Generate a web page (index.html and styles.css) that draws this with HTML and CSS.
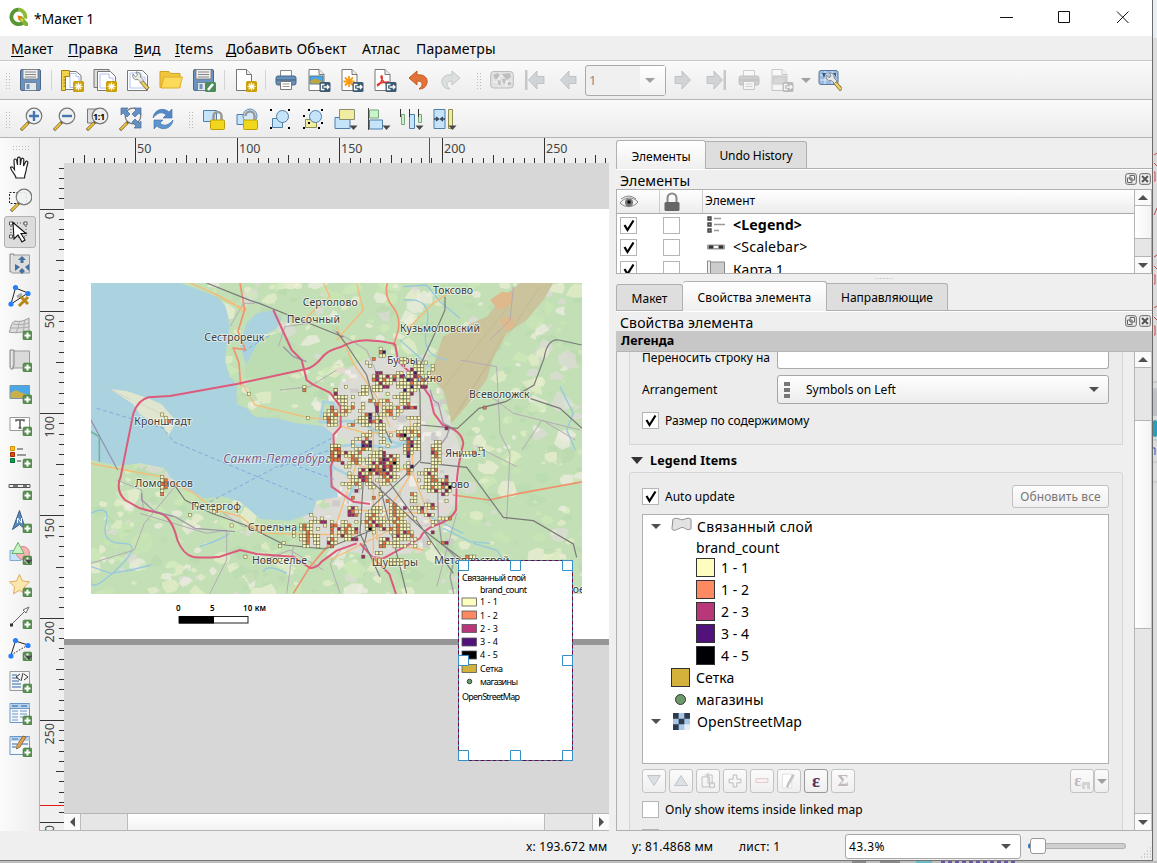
FILE: index.html
```html
<!DOCTYPE html>
<html lang="ru">
<head>
<meta charset="utf-8">
<title>*Макет 1</title>
<link rel="stylesheet" href="styles.css">
</head>
<body>
<svg class="defs" width="0" height="0">
<defs>
<linearGradient id="gloss" x1="0" y1="0" x2="1" y2="0"><stop offset="0" stop-color="#bbb"/><stop offset=".25" stop-color="#eee"/><stop offset="1" stop-color="#ccc"/></linearGradient>
<g id="plus"><rect x="15" y="15" width="9" height="9" rx="1.5" fill="#589052" stroke="#497a45" stroke-width=".6"/><path d="M19.5 16.5v6M16.5 19.5h6" stroke="#fff" stroke-width="2"/></g>
<g id="star"><rect x="13" y="13" width="11" height="11" rx="1.5" fill="#c9a00c"/><path d="M18.500 14.500v8M14.500 18.500h8M15.700 15.700l5.600 5.600M21.300 15.700l-5.600 5.600" stroke="#fff6cf" stroke-width="1.300"/><circle cx="18.500" cy="18.500" r="2" fill="#fff"/></g>
<g id="exp"><rect x="12.500" y="14" width="11" height="10" rx="1.500" fill="#3c5a70"/><path d="M17.500 16.500h-3v5h3M16.500 19h5M20 17l2 2-2 2" stroke="#fff" fill="none" stroke-width="1.300"/></g>
<g id="page"><path d="M4.500 1.500h10l5 5v16h-15z" fill="#fff" stroke="#777"/><path d="M14.500 1.500v5h5" fill="#eee" stroke="#777"/></g>
<g id="lens"><path d="M10 15l-8 8" stroke="#5a4a1b" stroke-width="3"/><path d="M9 16l-6.500 6.500" stroke="#f0c23b" stroke-width="2"/><circle cx="15" cy="9" r="7.800" fill="#eff1f1" fill-opacity=".9" stroke="#777" stroke-width="1.200"/></g>
<g id="drop"><path d="M15.500 18.500h8l-4 4.500z" fill="#484848"/></g>
<g id="wrench"><path d="M15 13l7 8" stroke="#786b38" stroke-width="4"/><path d="M15 13l6.500 7.500" stroke="#efcf62" stroke-width="2.600"/><path d="M7 6a4 4 0 0 0 5 5.500l3 3 2.500-2.500-3-3A4 4 0 0 0 10 4l1.500 3-2 1.800z" fill="#e8e8e8" stroke="#777" stroke-width=".8"/></g>
<symbol id="i-save" viewBox="0 0 24 24"><rect x="1.500" y="1.500" width="20" height="21" rx="1.500" fill="#6b93bf" stroke="#49678b"/><path d="M4 1.500h15v9.500h-15z" fill="#eee" stroke="#777" stroke-width=".8"/><path d="M6 4h11M6 6.500h11M6 9h11" stroke="#888"/><path d="M5.500 14.500h12v8h-12z" fill="#e3e7eb" stroke="#678" stroke-width=".8"/><rect x="7.500" y="16" width="3" height="5" fill="#6b93bf"/></symbol>
<symbol id="i-saveas" viewBox="0 0 24 24"><use href="#i-save"/><rect x="13" y="14" width="11" height="10" rx="1.500" fill="#4d8b58"/><path d="M16 22l5-6" stroke="#fff" stroke-width="2.600"/></symbol>
<symbol id="i-newlay" viewBox="0 0 24 24"><path d="M2 3.500h14l5 4v14H2z" fill="#fff" stroke="#777"/><path d="M10 5.500h6v3h3v11h-9z" fill="#fff" stroke="#b0c2ef"/><path d="M1.500 2.500h8v6h-4v14h-4z" fill="#f0d24c" stroke="#a7850d"/><path d="M3.500 9h2M3.500 12h2M3.500 15h2M3.500 18h2" stroke="#937200"/><use href="#star"/></symbol>
<symbol id="i-dup" viewBox="0 0 24 24"><path d="M1 1.500h15v18H1z" fill="#ddd" stroke="#777"/><path d="M4.500 3.500h13l5 5v14h-18z" fill="#fff" stroke="#777"/><path d="M7 6h9v4h4v10H7z" fill="none" stroke="#b0c2ef"/><use href="#star"/></symbol>
<symbol id="i-mgr" viewBox="0 0 24 24"><path d="M1.500 2.500h15l5 5v15h-20z" fill="#fff" stroke="#777"/><path d="M4 5h11v4h4v11H4z" fill="none" stroke="#b0c2ef"/><use href="#wrench"/></symbol>
<symbol id="i-open" viewBox="0 0 24 24"><path d="M1 3.500h9l2 2h9v14H1z" fill="#eec53c" stroke="#d3a120"/><path d="M2 20L5 9h18.500l-3 11z" fill="#fbd959" stroke="#dfae2c"/></symbol>
<symbol id="i-newpage" viewBox="0 0 24 24"><use href="#page" x="-1"/><use href="#star"/></symbol>
<symbol id="i-print" viewBox="0 0 24 24"><path d="M6.500 8V2.500h11V8" fill="#fff" stroke="#888"/><rect x="2" y="8" width="20" height="9" rx="2" fill="#668fb9" stroke="#466788"/><path d="M2 12h20" stroke="#405f7d"/><path d="M6.500 13.500h11v8h-11z" fill="#fff" stroke="#777"/><path d="M8.500 16h7M8.500 18.500h7" stroke="#999"/></symbol>
<symbol id="i-eximg" viewBox="0 0 24 24"><use href="#page" x="-2.500"/><path d="M3 8h13v8H3z" fill="#47a9ea" stroke="#56798c"/><path d="M3.500 15.500v-3l5-2 7 3v2z" fill="#c1a63e"/><use href="#exp"/></symbol>
<symbol id="i-exsvg" viewBox="0 0 24 24"><use href="#page" x="-2.500"/><path d="M9 8v11M3.500 13.500h11M5 9.500l8 8M13 9.500l-8 8" stroke="#fa9a0d" stroke-width="1.800"/><use href="#exp"/></symbol>
<symbol id="i-expdf" viewBox="0 0 24 24"><use href="#page" x="-2.500"/><path d="M4 18c4-2 6-7 5-10-2-1-1 5 5 8M4 17c3-3 8-3 12-3" fill="none" stroke="#e23427" stroke-width="1.500"/><use href="#exp"/></symbol>
<symbol id="i-undo" viewBox="0 0 24 24"><path d="M3 10l8-7v4c7-1 11 3 10 8-1 4-4 6-8 6 4-3 5-8-2-8v4z" fill="#e1733a" stroke="#c75822"/></symbol>
<symbol id="i-redo" viewBox="0 0 24 24"><path d="M21 10l-8-7v4c-7-1-11 3-10 8 1 4 4 6 8 6-4-3-5-8 2-8v4z" fill="#dcdfdf" stroke="#c3c7c7"/></symbol>
<symbol id="i-atlas" viewBox="0 0 24 24"><rect x=".7" y="3.500" width="22.600" height="16.500" rx="3" fill="#e2e2e2" stroke="#bcbcbc"/><path d="M3 8h18M3 14h18M9 5v14M16 5v14" stroke="#f6f6f6"/><path d="M3 7l5-2 2 2-3 4-2 0zM8 12l3 1-1 5-2-2zM12 6l8-1 1 4-4 3-3-3zM12 11h4l-1 5-2-1zM18 14h3v3h-3z" fill="#bfbfbf"/></symbol>
<symbol id="i-first" viewBox="0 0 24 24"><path d="M2 2h2.500v20H2z" fill="#c4c8cb"/><path d="M5.500 12L14 3v5.500h7v7h-7V21z" fill="#d0d4d6" stroke="#bfc3c6"/></symbol>
<symbol id="i-prev" viewBox="0 0 24 24"><path d="M4.500 12L13 3v5.500h7v7h-7V21z" fill="#d0d4d6" stroke="#bfc3c6"/></symbol>
<symbol id="i-aset" viewBox="0 0 24 24"><rect x="1" y="2.500" width="19" height="14" rx="2" fill="#9bbce0" stroke="#56799f"/><path d="M2 7h17M2 12h17M7 3v13M14 3v13" stroke="#dceaf8"/><path d="M4 5h4l-2 5zM15 5h3v4z" fill="#36597f"/><use href="#wrench" x="1.500" y="1"/></symbol>
<symbol id="i-zin" viewBox="0 0 24 24"><use href="#lens"/><path d="M15 4v10M10 9h10" stroke="#4477af" stroke-width="2.400"/></symbol>
<symbol id="i-zout" viewBox="0 0 24 24"><use href="#lens"/><path d="M10 9h10" stroke="#4477af" stroke-width="2.400"/></symbol>
<symbol id="i-z11" viewBox="0 0 24 24"><path d="M2.500 2h15v14h-15z" fill="#ddd" stroke="#777"/><use href="#lens"/><text x="8" y="12.500" class="t11">1:1</text></symbol>
<symbol id="i-zfull" viewBox="0 0 24 24"><use href="#lens"/><path d="M3 1h7L8 3l4 4-3 3-4-4-2 2zM23 1h-7l2 2-4 4 3 3 4-4 2 2zM23 21h-7l2-2-4-4 3-3 4 4 2-2z" fill="#6491c2" stroke="#426c9c" stroke-width=".7"/></symbol>
<symbol id="i-refresh" viewBox="0 0 24 24"><path d="M2 11C3 2 13 0 18 5l3-3v9h-9l3-3c-4-4-9-2-13 3z" fill="#5389c8" stroke="#396da8" stroke-width=".6"/><path d="M22 13c-1 9-11 11-16 6l-3 3v-9h9l-3 3c4 4 9 2 13-3z" fill="#5f94cf" stroke="#396da8" stroke-width=".6"/></symbol>
<symbol id="i-lock" viewBox="0 0 24 24"><path d="M1.500 3.500h13v11h-13z" fill="#c5e4fa" stroke="#4f7ea8"/><path d="M11.500 13V9a4 4 0 0 1 8 0v4" fill="none" stroke="#999" stroke-width="2.500"/><rect x="8.500" y="13" width="14" height="9.500" rx="1" fill="#f0d71b" stroke="#bd9e0a"/></symbol>
<symbol id="i-unlock" viewBox="0 0 24 24"><path d="M2 7.500h9v10H2z" fill="#c5e4fa" stroke="#4f7ea8"/><circle cx="15" cy="9" r="7" fill="#d3e9f8" stroke="#5f8ab2"/><path d="M10.500 9a4.500 4.500 0 0 1 9 0v4" fill="none" stroke="#999" stroke-width="2.500"/><rect x="8.500" y="13" width="14" height="9.500" rx="1" fill="#f0d71b" stroke="#bd9e0a"/></symbol>
<symbol id="i-group" viewBox="0 0 24 24"><path d="M4.500 11.500h10v9h-10z" fill="#c5e4fa" stroke="#4f7ea8"/><circle cx="14.500" cy="9.500" r="6" fill="#c5e4fa" stroke="#4f7ea8"/><path d="M2 2h2v2H2zM20 2h2v2h-2zM2 20h2v2H2zM20 20h2v2h-2z"/></symbol>
<symbol id="i-ungroup" viewBox="0 0 24 24"><path d="M4.500 12.500h11v8h-11z" fill="#f1eda0" stroke="#8d8d52"/><circle cx="14.500" cy="9.500" r="6" fill="#c5e4fa" stroke="#4f7ea8"/><path d="M7 2h2v2H7zM20 2h2v2h-2zM2 8h2v2H2zM2 20h2v2H2zM20 15h2v2h-2zM17 20h2v2h-2zM7 15h2v2H7z"/></symbol>
<symbol id="i-raise" viewBox="0 0 24 24"><path d="M1 10.500h15v11H1z" fill="#c5e4fa" stroke="#4f7ea8"/><path d="M5.500 2.500h15v10h-15z" fill="#f1eda0" stroke="#8d8d72"/><use href="#drop"/></symbol>
<symbol id="i-align" viewBox="0 0 24 24"><path d="M2.500 3h9v8h-9z" fill="#c8f5ca" stroke="#79a77b"/><path d="M2.500 13h13v9h-13z" fill="#c5e4fa" stroke="#4f7ea8"/><path d="M1.500 1v22" stroke="#444"/><use href="#drop"/></symbol>
<symbol id="i-dist" viewBox="0 0 24 24"><path d="M1.500 7.500h3v10h-3zM18.500 7.500h3v8h-3z" fill="#c8f5ca" stroke="#79a77b"/><path d="M9.500 7.500h5v14h-5z" fill="#c5e4fa" stroke="#4f7ea8"/><path d="M.5 2v8M9.500 2v8M18.500 2v8" stroke="#333"/><use href="#drop"/></symbol>
<symbol id="i-resize" viewBox="0 0 24 24"><path d="M1 2.500h11v19H1z" fill="#c5e4fa" stroke="#4f7ea8"/><path d="M15.500 2.500h4v19h-4z" fill="#f1eda0" stroke="#8d8d52"/><path d="M1 12h4M12 12H8M3 10l2.500 2L3 14M10 10l-2.500 2 2.500 2" stroke="#345" fill="none" stroke-width="1.300"/><use href="#drop"/></symbol>
<symbol id="i-hand" viewBox="0 0 24 24"><path d="M8 22c0-3-5-7-5.500-10.500 1.500-1.500 3 .5 4 2L6 4.500c0-2 2.300-2 2.700 0L9.500 9V2.700c0-2 2.800-2 2.800 0V9l1-5.500c.3-2 2.700-1.500 2.500.5L15.500 10l2-4c1-1.600 2.800-.6 2.300 1L18.500 12c-.5 5-2 6.500-2 10z" fill="#fff" stroke="#222" stroke-width="1.200"/></symbol>
<symbol id="i-zoomrect" viewBox="0 0 24 24"><path d="M1.500 4.500h17v11h-17z" fill="none" stroke="#222" stroke-dasharray="2 1.500"/><use href="#lens" x="1"/></symbol>
<symbol id="i-select" viewBox="0 0 24 24"><path d="M3 3h15v14H3z" fill="none" stroke="#444" stroke-dasharray="1 2"/><path d="M1.500 2h3v3h-3zM16 2h3v3h-3zM1.500 15h3v3h-3z" fill="#fff" stroke="#555"/><path d="M5 2.500l1 16.500 4-4 4 7 3-2-4-6.500h5z" fill="#fff" stroke="#111" stroke-width="1.100"/></symbol>
<symbol id="i-move" viewBox="0 0 24 24"><path d="M2 2h4v18H2z" fill="url(#gloss)" stroke="#888"/><path d="M5 3h16.500v18H4" fill="#ddd" stroke="#999"/><path d="M14 4l4 4h-2.500v3h-3V8H10zM14 22l3-3-3-3-3 3zM7 12l5 3-5 4zM21 12l-4 3 4 4z" fill="#42709f"/></symbol>
<symbol id="i-nodes" viewBox="0 0 24 24"><path d="M3 20L7.500 4 20 9 3 20" stroke="#222" fill="none"/><path d="M11 11l9 9M20 13l-9 9" stroke="#b7871b" stroke-width="3"/><path d="M9 13l5-3" stroke="#aaa" stroke-width="3"/><circle cx="3" cy="20" r="2.600" class="nd"/><circle cx="7.500" cy="3.500" r="2.600" class="nd"/><circle cx="20" cy="9.500" r="2.600" class="nd"/></symbol>
<symbol id="i-map3d" viewBox="0 0 24 24"><path d="M1 16c2-2 1-9 6-11 5 1 9 0 14-3v14c-7-1-12 2-20 0z" fill="#ddd" stroke="#999"/><path d="M5 8c5 1 10 1 16-1M3 12c6 0 12 0 18-1M12 5c-2 4-1 7-4 11M17 4c-2 4 0 8-2 11" stroke="#aaa" fill="none"/><use href="#plus"/></symbol>
<symbol id="i-map" viewBox="0 0 24 24"><path d="M5 3h16.500v17H5z" fill="#dadada" stroke="#999"/><path d="M2 2h4v16H5v3H3l-1-2z" fill="url(#gloss)" stroke="#888"/><use href="#plus"/></symbol>
<symbol id="i-pic" viewBox="0 0 24 24"><path d="M2 5.500h19.500v13H2z" fill="#4ba8e8" stroke="#7596a7"/><path d="M2.500 18v-5l5-3 7 3 6.500 2v3z" fill="#c9ae4a"/><use href="#plus"/></symbol>
<symbol id="i-label" viewBox="0 0 24 24"><path d="M2 5.500h19.500v13H2z" fill="#fff" stroke="#999"/><path d="M8 9.500V8h8v1.500M12 8v8M10.500 16h3" stroke="#555" stroke-width="1.500" fill="none"/><use href="#plus"/></symbol>
<symbol id="i-legend" viewBox="0 0 24 24"><path d="M2.500 2.500h4v4h-4z" fill="#ffc51b" stroke="#d68a00"/><path d="M2.500 8.500h4v4h-4z" fill="#e6470f" stroke="#a72900"/><path d="M2.500 14.500h4v4h-4z" fill="#0aa354" stroke="#006931"/><path d="M9 5h6M9 11h9M9 17h4" stroke="#999" stroke-width="2"/><use href="#plus"/></symbol>
<symbol id="i-scale" viewBox="0 0 24 24"><path d="M1 8.500h21v3H1z" fill="#eee" stroke="#555"/><path d="M5 10h5M15 10h4" stroke="#777" stroke-width="2"/><use href="#plus"/></symbol>
<symbol id="i-north" viewBox="0 0 24 24"><path d="M11.500 1.500l6 19-6-5-7 5z" fill="#5c8abb" stroke="#345b84"/><path d="M9.500 14V9l4 5V9" stroke="#fff" fill="none"/><use href="#plus"/></symbol>
<symbol id="i-shape" viewBox="0 0 24 24"><path d="M2 9.500h11v10H2z" fill="#c5e4fa" stroke="#7eabcf"/><circle cx="15" cy="12" r="6.500" fill="#f6b5b3" stroke="#de8785"/><path d="M10 1.500l6 11H4z" fill="#c6f4c5" stroke="#6caf6a"/><use href="#plus"/><use href="#drop" x="1"/></symbol>
<symbol id="i-marker" viewBox="0 0 24 24"><path d="M11.500 1.500l3 6.500 7 .8-5 5 1 7-6-3.500-6 3.500 1-7-5-5 7-.8z" fill="#fbe6ad" stroke="#e3ab60"/><use href="#plus"/></symbol>
<symbol id="i-arrow" viewBox="0 0 24 24"><path d="M3 20L17 6" stroke="#666"/><path d="M21 2l-6 3 3 3z" fill="#fff" stroke="#666"/><path d="M2 18.500h3v3H2z" fill="#333"/><use href="#plus"/></symbol>
<symbol id="i-poly" viewBox="0 0 24 24"><path d="M3 18L7.500 4 20 8" stroke="#222" fill="none"/><path d="M20 8L3 18" stroke="#222" stroke-dasharray="1.500 1.500"/><circle cx="3" cy="19" r="2.600" class="nd"/><circle cx="7.500" cy="3.500" r="2.600" class="nd"/><circle cx="20" cy="8.500" r="2.600" class="nd"/><use href="#plus"/><use href="#drop" x="1"/></symbol>
<symbol id="i-html" viewBox="0 0 24 24"><path d="M2 2.500h19.500v19H2z" fill="#f5f5f5" stroke="#999"/><path d="M4 6h5M4 9h6M4 12h7M4 15h9M4 18h9" stroke="#6d97c4" stroke-width="1.500"/><path d="M12 5l-4 3 4 3M16 5l4 3-4 3M15 4l-2 8" stroke="#333" fill="none"/><use href="#plus"/></symbol>
<symbol id="i-table" viewBox="0 0 24 24"><path d="M2 2.500h19.500v19H2z" fill="#f5f7fa" stroke="#6a96c6"/><path d="M2.500 3h19v4h-19z" fill="#b5d2ee"/><path d="M4 5h6M13 5h6" stroke="#5586b7" stroke-width="1.500"/><path d="M2 7.500h19M4 10h6M12 10h7M4 13h6M12 13h7M4 16h6M12 16h4M4 19h6" stroke="#6a96c6"/><use href="#plus"/></symbol>
<symbol id="i-ftable" viewBox="0 0 24 24"><path d="M2 3.500h19.500v18H2z" fill="#f5f7fa" stroke="#6a96c6"/><path d="M2.500 4h19v4h-19z" fill="#b5d2ee"/><path d="M4 6h6M4 11h5M4 14h4M14 11h6" stroke="#6a96c6" stroke-width="1.300"/><path d="M15 3l-6 9-.5 4 3.500-2 6-10z" fill="#dfa34b" stroke="#84592a" stroke-width=".8"/><use href="#plus"/></symbol>
<symbol id="i-check" viewBox="0 0 16 16"><path d="M3.500 7l3 5 6-9.500" fill="none" stroke="#000" stroke-width="2.200"/></symbol>
<symbol id="i-float" viewBox="0 0 12 12"><rect x=".7" y=".7" width="10.600" height="10.600" rx="1.800" fill="none" stroke="#666"/><path d="M5 2.500h4.500V7H5z M2.500 5h4.500v4.500H2.500z" fill="#efefef" stroke="#666"/></symbol>
<symbol id="i-close" viewBox="0 0 12 12"><rect x=".7" y=".7" width="10.600" height="10.600" rx="1.800" fill="none" stroke="#666"/><path d="M3 3l6 6M9 3l-6 6" stroke="#555" stroke-width="2"/></symbol>
</defs>
</svg>
<div class="screen">
<main class="window">
  <header class="title">
    <svg class="logo" viewBox="0 0 20 20"><path d="M9.800 2.600a7.300 7.300 0 1 0 5.500 12" fill="none" stroke="#589632" stroke-width="3.800"/><path d="M9.500 2.600a7.300 7.300 0 0 1 6.700 9" fill="none" stroke="#8dbb36" stroke-width="3.800"/><path d="M10 10l3-.5 6 6.500v3h-3l-6-6z" fill="#83b238"/><path d="M8.500 8.500l5 .8-4 4z" fill="#ee7913"/><path d="M12 12l2 2" stroke="#f0d038" stroke-width="2"/></svg>
    <span class="titletext">*Макет 1</span>
    <svg class="winctl" viewBox="0 0 140 20"><path d="M4 10.500h13M62.500 4.500h11v11h-11zM121 4.500l11.500 11.500M132.500 4.500L121 16" fill="none" stroke="#111"/></svg>
  </header>
  <nav class="menu"><span class="m1"><u>М</u>акет</span><span class="m2"><u>П</u>равка</span><span class="m3"><u>В</u>ид</span><span class="m4"><u>I</u>tems</span><span class="m5"><u>Д</u>обавить Объект</span><span class="m6">Атлас</span><span class="m7">Параметры</span></nav>
  <div class="bar">
    <i class="grip"></i><svg><use href="#i-save"/></svg><i class="sep"></i><svg><use href="#i-newlay"/></svg><svg><use href="#i-dup"/></svg><svg><use href="#i-mgr"/></svg><svg><use href="#i-open"/></svg><svg><use href="#i-saveas"/></svg><i class="sep"></i><svg><use href="#i-newpage"/></svg><i class="sep"></i><svg><use href="#i-print"/></svg><svg><use href="#i-eximg"/></svg><svg><use href="#i-exsvg"/></svg><svg><use href="#i-expdf"/></svg><svg><use href="#i-undo"/></svg><svg><use href="#i-redo"/></svg><i class="grip mid"></i><svg><use href="#i-atlas"/></svg><svg><use href="#i-first"/></svg><svg><use href="#i-prev"/></svg>
    <div class="pagebox"><span>1</span><b><i class="tri dim"></i></b></div>
    <svg class="flip"><use href="#i-prev"/></svg><svg class="flip"><use href="#i-first"/></svg><svg class="gray"><use href="#i-print"/></svg><svg class="gray"><use href="#i-eximg"/></svg><i class="tri dim lone"></i><svg><use href="#i-aset"/></svg>
  </div>
  <div class="bar two">
    <i class="grip"></i><svg><use href="#i-zin"/></svg><svg><use href="#i-zout"/></svg><svg><use href="#i-z11"/></svg><svg><use href="#i-zfull"/></svg><svg><use href="#i-refresh"/></svg><i class="grip mid"></i><svg><use href="#i-lock"/></svg><svg><use href="#i-unlock"/></svg><svg><use href="#i-group"/></svg><svg><use href="#i-ungroup"/></svg><svg><use href="#i-raise"/></svg><svg><use href="#i-align"/></svg><svg><use href="#i-dist"/></svg><svg><use href="#i-resize"/></svg>
  </div>
  <div class="body">
    <aside class="tools"><i class="hgrip"></i><span><svg><use href="#i-hand"/></svg></span><span><svg><use href="#i-zoomrect"/></svg></span><span class="on"><svg><use href="#i-select"/></svg></span><span><svg><use href="#i-move"/></svg></span><span><svg><use href="#i-nodes"/></svg></span><span><svg><use href="#i-map3d"/></svg></span><span><svg><use href="#i-map"/></svg></span><span><svg><use href="#i-pic"/></svg></span><span><svg><use href="#i-label"/></svg></span><span><svg><use href="#i-legend"/></svg></span><span><svg><use href="#i-scale"/></svg></span><span><svg><use href="#i-north"/></svg></span><span><svg><use href="#i-shape"/></svg></span><span><svg><use href="#i-marker"/></svg></span><span><svg><use href="#i-arrow"/></svg></span><span><svg><use href="#i-poly"/></svg></span><span><svg><use href="#i-html"/></svg></span><span><svg><use href="#i-table"/></svg></span><span><svg><use href="#i-ftable"/></svg></span></aside>
    <section class="view">
      <svg class="rtop" id="rtop" viewBox="40 138 569 25"></svg>
      <svg class="rleft" id="rleft" viewBox="40 163 24 667"></svg>
      <svg class="canvas" viewBox="64 163 545 650">
        <rect x="64" y="163" width="545" height="650" fill="#d7d7d7"/><rect x="64" y="209" width="545" height="430" fill="#fff"/><rect x="64" y="639" width="545" height="6" fill="#969696"/>
        <svg x="91" y="283" width="491" height="311" viewBox="3 9 1473 933" preserveAspectRatio="none">
          <rect width="1480" height="950" fill="#c3dfb6"/>
          <g id="patches"></g>
          <path d="M765 270L830 235 940 230 1000 300 1070 400 1110 500 1105 660 1050 740 960 820 860 830 700 800 640 800 670 700 720 680 700 430 735 350z" fill="#dedcda" opacity=".88"/>
          <g id="blocks"></g>
          <path d="M1058 170L1110 145 1190 110 1240 50 1290 9 1390 9 1360 60 1310 120 1250 160 1210 230 1190 300 1140 365 1085 430 1060 330 1020 290z" fill="#cac39b"/>
          <path d="M1085 420L1350 20M1055 330L1270 60M1110 390L1240 170" stroke="#b6a77f" stroke-width="1.500" opacity=".6"/>
          <path d="M1200 60l35-25 40 5-15 35-35 15zM1230 120l35-15 10 30-25 20z" fill="#dfb98b"/>
          <path d="M3 9H270L330 30 380 50 405 75 415 110 418 150 410 190 406 245 420 290 440 312 440 372 470 385 495 410 560 415 620 430 700 438 727 460 722 500 732 560 725 600 745 650 680 662 668 700 600 722 510 717 480 690 450 665 400 650 340 655 290 625 240 592 225 565 150 550 80 558 30 545 3 540z" fill="#abd3df"/>
          <path d="M60 327l50 6 60 20 45 20 25 30 20 20-25 45-15-30-40-15-30-20-22-32z" fill="#e0e5d0"/><path d="M60 327l60 30M150 370l70 35 20 20" stroke="#a58794" stroke-dasharray="4 4" fill="none"/>
          <path d="M450 195l20-65 30-30 50-10 25 25-15 30-35 20-25 65-30 30z" fill="#abd3df"/>
          <path d="M465 260l45-85 65-20 55 60 10 50-110 35-65-10z" fill="#bcdcb2"/>
          <path d="M700 365l30 5 10 60-50-5zM720 430q80-20 130 20t80 40 60-30M730 500q70-10 140 0t90-30M725 560l80 40-30 50" fill="none" stroke="#abd3df" stroke-width="9"/>
          <path d="M3 700q60-30 45 30t50 60-20 80-75 20M330 800q60-20 90-40M3 860l60 20 60-10 60-15M590 880q-60-30-70-5M940 20l70-5 40 50 60 50M940 60q90-10 70 80t60 100M1150 790l70 20 30 45M1410 320l40 80-20 50 26 60M1060 745l80 40 60 5M1000 700l120 60M930 180l90 80" fill="none" stroke="#97c9de" stroke-width="4"/>
          <g fill="none" stroke="#b4abb5" stroke-width="3"><path d="M3 850l130-40 30-80 100-120M80 600l75 30 5 60 90 20M150 700l200 60 60-10v90l-50 100M420 140l40-70 35 0M565 200l20-60 70-10M740 270l-80 50-90 10M400 700l60 40 150 0M610 800l-20 140M500 850l100-40 100 60M730 150l100 60 30 70M1110 240l110 20 10 200 30 60-10 200M1270 20l-10 100-60 60M1456 480l-100-60-60 90M1100 700l-60 220M1160 500l120 60M1190 340l80 60 200 50M750 940l-30-90 40-50"/></g>
          <g fill="none" stroke="#f5bb77" stroke-width="4"><path d="M300 9l80 35 40 25 50 20M640 120l80-70-20-41M370 40l60 30 30 25M450 300l45 75 160 38 90 8M3 550l100 20 110 20 100 50 60 50 80 20 60 50 280 5M720 430l110 30 160-10M740 140l50 110 70 100 40 90M735 510l80 50 150 10 60 160M850 440v380M800 550l-60 180M870 600l-10 180M960 420l10 150-100 160M780 690l230 10M890 790l110 20M720 840l180-90 90-80M740 180l80-90-20-80M950 150l80-80 60-40"/></g>
          <g fill="none" stroke="#f0926e" stroke-width="5"><path d="M450 9l14 80-20 65 22 55-36-5 17 45 5 67M892 9q-10 40 15 70t18 70l-15 50M1088 645l110 15 90-20 190-35M720 790l-60 70-50 80"/></g>
          <g fill="none" stroke="#dd5a7b" stroke-width="6" stroke-linejoin="round"><path d="M550 90L605 210 635 240 650 300 668 313 720 338 752 380 752 440 730 465 733 530 722 560 725 620 760 645 790 665 840 672"/><path d="M915 192Q870 182 850 182 800 175 755 200 715 210 700 228 670 265 645 268L440 312 240 348 175 352Q145 360 130 400L92 590Q75 630 105 660L150 685 210 700Q245 710 262 780 280 825 310 831 340 835 390 830L450 810 500 822 610 830 660 864Q680 865 695 845L740 812 800 790"/><path d="M915 192L925 245 985 300 1020 350 1032 400 1058 435Q1115 450 1120 490 1100 570 1100 620L1098 690Q1085 720 1030 738 1000 750 990 775L935 805 880 835 848 832 810 790M848 832l50 50 20 60"/></g>
          <g fill="none" stroke="#797979" stroke-width="3.500"><path d="M350 9l130 52 30 10 100 40 150 60M740 155l30 40 60 90 30 110 45 95M250 610l35 50 80 40 100 35 120 60 120 12 150-60M1065 50v40l-35 80-50 110 10 60 2 200-50 50-95 90-30 140M992 435l110 10 65-60 80-20 85-50 30-80q10-60 45-55l68 15M1320 355l90 30 66 60M990 547l140 15 110 150 90 10 120 70 10 40M840 600l160 150 250 190M900 610l100 140 90 130M870 620l80 320M820 600l-10 160 60 130"/></g>
          <g fill="none" stroke="#8b7a9d" stroke-width="4" opacity=".7"><path d="M3 420l80 150M155 640v20l40 35 60 15 60 35 120 10M1020 330l10 30 15 10 15 60 20 10-10 30-30 40 5 200 10 80 40 40-15 60 20 90M580 200l30 30 40 15"/></g>
          <path d="M3 455l25 15v75" fill="none" stroke="#73b39f" stroke-width="5"/>
          <path d="M20 385l200 60 30 40 420 175M360 665l365-190M570 560l150-50M460 215l80-50M570 540l170 60" fill="none" stroke="#82a9de" stroke-width="3" stroke-dasharray="12 8"/>
          <g class="maplabels">
            <text x="343" y="184" textLength="180">Сестрорецк</text><text x="638" y="79" textLength="165">Сертолово</text><text x="590" y="130" textLength="160">Песочный</text><text x="1029" y="43" textLength="120">Токсово</text><text x="930" y="157" textLength="240">Кузьмоловский</text><text x="891" y="253" textLength="92">Бугры</text><text x="936" y="305" textLength="121">Мурино</text><text x="1137" y="355" textLength="182">Всеволожск</text><text x="133" y="434" textLength="172">Кронштадт</text><text x="135" y="620" textLength="174">Ломоносов</text><text x="304" y="689" textLength="149">Петергоф</text><text x="473" y="753" textLength="148">Стрельна</text><text x="486" y="853" textLength="165">Новоселье</text><text x="845" y="857" textLength="139">Шушары</text><text x="1033" y="853" textLength="225">Металлострой</text><text x="1066" y="532" textLength="124">Янино-1</text><text x="1010" y="625" textLength="128">Кудрово</text><text x="1448" y="938">ое</text><text class="city" x="400" y="550" textLength="322">Санкт-Петербург</text>
          </g>
          <g id="cells"></g>
        </svg>
        <g class="sb"><text x="176" y="611">0</text><text x="210" y="611">5</text><text x="243" y="611" textLength="23">10 км</text><rect x="179" y="616.5" width="69" height="6.500" fill="#fff" stroke="#222"/><rect x="179" y="616" width="35" height="7.500"/></g>
        <rect x="458.500" y="560.500" width="114" height="200" fill="#fff" stroke="#3390c8"/><rect x="458.500" y="560.500" width="114" height="200" fill="none" stroke="#6c0c3a" stroke-dasharray="4 2"/>
        <g class="lg"><text x="462" y="581" textLength="64">Связанный слой</text><text x="480" y="593" textLength="47">brand_count</text><text x="480" y="605" textLength="18">1 - 1</text><text x="480" y="619" textLength="18">1 - 2</text><text x="480" y="632" textLength="18">2 - 3</text><text x="480" y="645" textLength="18">3 - 4</text><text x="480" y="658" textLength="18">4 - 5</text><text x="480" y="672" textLength="23">Сетка</text><text x="480" y="685" textLength="38">магазины</text><text x="462" y="700" textLength="58">OpenStreetMap</text></g>
        <g stroke="#555" stroke-width=".8"><rect x="462" y="598" width="14.500" height="8" fill="#fcfdbf"/><rect x="462" y="611" width="14.500" height="8" fill="#fc8961"/><rect x="462" y="624.500" width="14.500" height="8" fill="#b73779"/><rect x="462" y="638" width="14.500" height="8" fill="#51127c"/><rect x="462" y="651" width="14.500" height="8" fill="#000"/><rect x="462" y="664.500" width="14.500" height="8" fill="#d3b13b"/><circle cx="469.500" cy="681.500" r="2.300" fill="#6c9a6c" stroke="#222"/></g>
        <path d="M458.500 560.500h10v10h-10zM510.500 560.500h10v10h-10zM562.500 560.500h10v10h-10zM458.500 655.500h10v10h-10zM562.500 655.500h10v10h-10zM458.500 750.500h10v10h-10zM510.500 750.500h10v10h-10zM562.500 750.500h10v10h-10z" fill="#fff" stroke="#3390c8"/>
      </svg>
      <div class="hscroll"><b class="l"></b><i></i><em></em><i class="r"></i><b class="rr"></b></div>
    </section>
    <section class="panel">
      <div class="tabs one"><span class="tab act a1">Элементы</span><span class="tab a2">Undo History</span></div>
      <div class="dock d1"><span>Элементы</span><svg><use href="#i-float"/></svg><svg><use href="#i-close"/></svg></div>
      <div class="items">
        <div class="tbl">
          <div class="row head"><span><svg class="eye" viewBox="0 0 20 14"><path d="M1 8C5 2 14 1 19 7 14 13 6 13 1 8zM2 4q8-6 15 0" fill="#f2f2f2" stroke="#888"/><circle cx="10" cy="7.500" r="4" fill="#777"/><circle cx="10" cy="7" r="1.800" fill="#111"/></svg></span><span><svg class="lk" viewBox="0 0 16 20"><path d="M3.500 11V6a4.500 4.500 0 0 1 9 0v5" fill="none" stroke="#888" stroke-width="2"/><rect x=".5" y="10" width="15" height="9" rx="1.500" fill="#666"/></svg></span><span>Элемент</span></div>
          <div class="row"><span><i class="cb"><svg><use href="#i-check"/></svg></i></span><span><i class="cb"></i></span><span class="nm"><svg viewBox="0 0 18 18"><path d="M1 1h3v3H1zM1 7h3v3H1zM1 13h3v3H1z" fill="#999" stroke="#444" stroke-width="1.400"/><path d="M7 2.500h7M7 8.500h11M7 14.500h5" stroke="#999" stroke-width="1.500"/></svg><b>&lt;Legend&gt;</b></span></div>
          <div class="row"><span><i class="cb"><svg><use href="#i-check"/></svg></i></span><span><i class="cb"></i></span><span class="nm"><svg viewBox="0 0 18 18"><rect x="0" y="6.500" width="18" height="5" rx="1" fill="#999"/><path d="M2 9h4M12 9h4" stroke="#333" stroke-width="3"/><path d="M7 9h4" stroke="#fff" stroke-width="2"/></svg><span class="sc">&lt;Scalebar&gt;</span></span></div>
          <div class="row"><span><i class="cb"><svg><use href="#i-check"/></svg></i></span><span><i class="cb"></i></span><span class="nm"><svg viewBox="0 0 18 18"><path d="M3 2h14.500v16H3z" fill="#ccc" stroke="#888"/><path d="M.5 1h3v17h-3z" fill="#eee" stroke="#888"/></svg>Карта 1</span></div>
        </div>
        <div class="vscroll v1"><b></b><em></em><i></i><b class="dn"></b></div>
      </div>
      <div class="split"></div>
      <div class="tabs second"><span class="tab b1">Макет</span><span class="tab act b2">Свойства элемента</span><span class="tab b3">Направляющие</span></div>
      <div class="dock d2"><span>Свойства элемента</span><svg><use href="#i-float"/></svg><svg><use href="#i-close"/></svg></div>
      <div class="cap">Легенда</div>
      <div class="props">
        <div class="form">
          <div class="gb g1">
            <div class="fr wrap"><label>Переносить строку на</label><i class="inp"></i></div>
            <div class="fr arr"><label>Arrangement</label><div class="combo"><svg viewBox="0 0 6 16"><path d="M0 0h6v4H0zM0 6h6v4H0zM0 12h6v4H0z" fill="#777"/></svg><span>Symbols on Left</span><i class="tri"></i></div></div>
            <div class="fr ck"><i class="cb"><svg><use href="#i-check"/></svg></i><span>Размер по содержимому</span></div>
          </div>
          <h3><i class="tri big"></i>Legend Items</h3>
          <div class="gb g2">
            <div class="fr au"><i class="cb"><svg><use href="#i-check"/></svg></i><span>Auto update</span><button>Обновить все</button></div>
            <div class="tree">
              <div class="t0"><i class="tri ex"></i><svg class="ly" viewBox="0 0 22 16"><path d="M2 2c5-3 8 2 12 0s6-1 7 0v10c-5 3-7-3-11-1s-8 4-9 1z" fill="#e2e2e2" stroke="#888"/></svg>Связанный слой</div>
              <div class="t2 bc">brand_count</div>
              <div class="t2"><i class="sw c1"></i>1 - 1</div><div class="t2"><i class="sw c2"></i>1 - 2</div><div class="t2"><i class="sw c3"></i>2 - 3</div><div class="t2"><i class="sw c4"></i>3 - 4</div><div class="t2"><i class="sw c5"></i>4 - 5</div>
              <div class="t1"><i class="sw c6"></i>Сетка</div>
              <div class="t1"><i class="dot"></i>магазины</div>
              <div><i class="tri ex"></i><svg class="ras" viewBox="0 0 18 18"><path d="M0 0h18v18H0z" fill="#a9c6e6"/><path d="M0 0h6v6H0zM12 0h6v6h-6zM6 6h6v6H6zM0 12h6v6H0z" fill="#2d3b50"/><path d="M12 12h6v6h-6z" fill="#e4edf6"/></svg>OpenStreetMap</div>
            </div>
            <div class="btns">
              <b><svg viewBox="0 0 24 24"><path d="M5 6h14l-7 11z" fill="#dbe0e5" stroke="#bcc0c4"/></svg></b><b><svg viewBox="0 0 24 24"><path d="M5 17h14L12 6z" fill="#dbe0e5" stroke="#bcc0c4"/></svg></b><b><svg viewBox="0 0 24 24"><path d="M5.500 7.500h8v11h-8zM8.500 5.500h8v10M12 3v12M14 14h5v5h-5z" fill="none" stroke="#bbb"/></svg></b><b><svg viewBox="0 0 24 24"><path d="M10 5.500h4v4.500h4.500v4H14v4.500h-4V14H5.500v-4H10z" fill="#f5f5f5" stroke="#b5bab5"/></svg></b><b><svg viewBox="0 0 24 24"><path d="M5.500 9.500h13v4h-13z" fill="#fbf3f3" stroke="#dfc3c3"/></svg></b><b><svg viewBox="0 0 24 24"><path d="M5 4.500h10v15H5z" fill="#fff" stroke="#ddd"/><path d="M17 5l-6 11-1 3" stroke="#c4c4c4" stroke-width="3" fill="none"/></svg></b><b class="en">ε</b><b class="sg">Σ</b><u></u><b class="ef">ε<svg viewBox="0 0 8 8"><path d="M0 1h8v7H5V4H3v4H0z" fill="#d4d4d4"/></svg></b><b class="dd"><i class="tri dim"></i></b>
            </div>
            <div class="fr only"><i class="cb"></i><span>Only show items inside linked map</span></div>
            <div class="fr last"><i class="cb"></i></div>
          </div>
        </div>
        <div class="vscroll v2"><b></b><i></i><em></em><i class="f"></i><b class="dn"></b></div>
      </div>
    </section>
  </div>
  <footer class="status"><span class="s1">x: 193.672 мм</span><span class="s2">y: 81.4868 мм</span><span class="s3">лист: 1</span><div class="zoom"><span>43.3%</span><i class="tri"></i></div><div class="slider"><i></i></div><svg class="sizer" viewBox="0 0 12 12"><path d="M10 1h1M7 4h1M10 4h1M4 7h1M7 7h1M10 7h1M1 10h1M4 10h1M7 10h1M10 10h1" stroke="#aaa"/></svg></footer>
</main>
<svg class="behind" viewBox="0 0 4 861"><rect width="4" height="861" fill="#dcdcdc"/><rect width="4" height="38" fill="#e8eef2"/><path d="M1 155l3-2M1 163l3 3M1 172h1v9h-1M1 215l3-7M1 257l3-2M1 266l3 3M1 275h1v9h-1M1 308l3-2M1 317l3 3M1 326h1v9h-1" stroke="#c44" fill="none"/><path d="M0 382h4M0 389h4" stroke="#aeb4ba"/><rect y="390" width="4" height="26" fill="#bfc1c5"/><rect y="420" width="4" height="17" rx="2" fill="#2c9db8"/><path d="M0 448h2v7" stroke="#2952b3" fill="none"/><path d="M0 440h4M0 462h4M0 482h4" stroke="#b6bec4"/></svg>
<svg class="under" viewBox="0 0 1157 2"><rect width="1157" height="2" fill="#bebebe"/><path d="M852 1h14M880 1h20" stroke="#888" stroke-width="2"/><path d="M916 1h16" stroke="#6bb8c6" stroke-width="2"/><path d="M941 1h76" stroke="#6a55a7" stroke-dasharray="4 3" stroke-width="2"/></svg>
</div>
<script src="map.js"></script>
</body>
</html>
```
FILE: styles.css
```css
* { box-sizing: border-box; }
body { margin: 0; font: 12px "Noto Sans", sans-serif; color: #000; overflow: hidden; }
i, em { font-style: normal; }
.defs { position: absolute; }
.screen { display: grid; grid-template-columns: 1153px 4px; grid-template-rows: 861px 2px; width: 1157px; height: 863px; overflow: hidden; }
.window { display: flex; flex-direction: column; height: 861px; background: #efefef; border-right: 1px solid #6b6b6b; border-bottom: 1px solid #777; }
.window > * { flex: none; }
.behind { width: 4px; height: 861px; }
.under { width: 1157px; height: 2px; grid-column: 1 / 3; }
.title { height: 36px; background: #fff; display: flex; align-items: center; padding-left: 9px; }
.logo { width: 20px; height: 20px; margin-top: -2px; }
.titletext { font-size: 14px; margin-left: 5px; letter-spacing: -.1px; }
.winctl { width: 140px; height: 20px; margin-left: auto; margin-right: 16px; margin-top: -2px; }
.menu { height: 24px; display: flex; gap: 15px; padding-left: 11px; font-size: 14px; line-height: 25px; white-space: nowrap; letter-spacing: .15px; }
.menu u { text-underline-offset: 2px; }
.m1 { width: 42px; } .m2 { width: 51px; } .m3 { width: 26px; } .m4 { width: 36px; } .m5 { width: 121px; } .m6 { width: 39px; }
.bar { height: 40px; display: flex; align-items: center; gap: 9px; padding-left: 5px; border-top: 1px solid #c9c9c9; border-bottom: 1px solid #b5b5b5; background: linear-gradient(#fafafa, #ececec); }
.bar > svg { width: 24px; height: 24px; flex: none; }
.bar.two { border-top: 0; height: 38px; padding-top: 1px; }
.grip { width: 5px; height: 17px; background: radial-gradient(circle, #bbb .7px, transparent 1px) 0 0 / 3px 3px; }
.grip.mid { width: 5px; margin: 0 0 0 4px; }
.bar .grip:first-child { width: 6px; margin-right: -1px; }
.sep { width: 1px; height: 20px; background: #d4d4d4; margin: 0 -1px; }
.flip { transform: scaleX(-1); }
.gray { filter: grayscale(1); opacity: .35; }
.pagebox { width: 81px; height: 31px; border: 1px solid #aaa; border-radius: 3px; margin: 0 -4px; display: flex; align-items: center; background: #f0f0f0; color: #9b8585; font-size: 13px; padding-left: 3px; }
.pagebox b { margin-left: auto; width: 25px; height: 29px; background: linear-gradient(#fff, #f1f1f1); display: flex; align-items: center; padding-left: 5px; }
.tri { display: inline-block; width: 0; border: 5px solid transparent; border-top-color: #505050; border-bottom: 0; }
.tri.dim { border-top-color: #a0a0a0; }
.lone { margin: 0 -2px; }
.t11 { font: bold 9px "Noto Sans", sans-serif; letter-spacing: -.3px; }
.nd { fill: #267ffa; }
.body { display: flex; height: 693px; }
.tools { width: 39px; background: linear-gradient(90deg, #fbfbfb, #ededed); display: flex; flex-direction: column; align-items: center; padding: 7px 0 0 1px; height: 693px; }
.hgrip { width: 17px; height: 5px; margin-bottom: 2px; background: radial-gradient(circle, #bbb .7px, transparent 1px) 0 0 / 3px 3px; }
.tools span { width: 32px; height: 32.050px; display: flex; align-items: center; justify-content: center; flex: none; }
.tools svg { width: 24px; height: 24px; }
.tools .on { border: 1px solid #b2b2b2; background: #dcdcdc; border-radius: 3px; }
.view { width: 570px; height: 693px; display: grid; grid-template-columns: 24px 545px; grid-template-rows: 25px 650px 17px; border-left: 1px solid #b2b2b2; border-bottom: 1px solid #b5b5b5; }
.rtop { grid-column: 1 / 3; width: 569px; height: 25px; }
.rleft { grid-row: 2 / 4; width: 24px; height: 667px; }
.canvas { width: 545px; height: 650px; }
.rtop text, .rleft text { font: 12.500px "Noto Sans", sans-serif; fill: #444; }
.rtop path, .rleft path { stroke: #333; fill: none; }
.rtop .cur, .rleft .cur { stroke: #e01818; }
.maplabels text { font: 31.500px "Noto Sans", sans-serif; fill: #3c3c3c; stroke: #fff; stroke-opacity: .65; stroke-width: 5px; paint-order: stroke; }
.maplabels .city { font: italic 36px "Noto Sans", sans-serif; fill: #755a86; }
.sb text { font: 600 8px "Noto Sans", sans-serif; }
.lg text { font: 9px "Noto Sans", sans-serif; }
.hscroll { display: flex; height: 17px; border-top: 1px solid #b5b5b5; background: #fafafa; }
.hscroll b { width: 16px; display: flex; align-items: center; justify-content: center; }
.hscroll b::before { content: ""; border: 5px solid transparent; border-left-width: 0; border-right-color: #505050; }
.hscroll .rr::before { border-left: 5px solid #505050; border-right: 0; }
.hscroll i { width: 48px; background: #e6e6e6; border: solid #bbb; border-width: 0 1px; }
.hscroll .r { width: 49px; }
.hscroll em { flex: 1; background: linear-gradient(#fff, #f3f3f3); }
.panel { width: 536px; margin-left: 7px; display: flex; flex-direction: column; height: 693px; }
.tabs { display: flex; align-items: flex-end; border-bottom: 1px solid #b0b0b0; box-shadow: 0 1px #fff; }
.one { height: 31px; }
.tab { display: block; height: 26px; line-height: 28px; border: 1px solid #b0b0b0; border-left: 0; border-bottom: 0; border-radius: 0 3px 0 0; background: #dedede; text-align: center; white-space: nowrap; }
.tab:first-child { border-left: 1px solid #b0b0b0; border-radius: 3px 3px 0 0; }
.act { height: 29px; margin-bottom: -1px; background: linear-gradient(#fff, #efefef); border-radius: 3px 3px 0 0; line-height: 32px; }
.a1 { width: 90px; } .a2 { width: 101px; height: 27px; letter-spacing: -.1px; }
.b1 { width: 67px; } .b2 { width: 144px; height: 30px; letter-spacing: .1px; } .b3 { width: 121px; height: 27px; }
.dock { display: flex; align-items: center; font-size: 14px; padding: 3px 1px 1px 4px; gap: 2px; }
.dock span { margin-right: auto; letter-spacing: .15px; }
.dock svg { width: 12px; height: 12px; margin-top: -3px; }
.d1 { height: 20px; }
.d2 { height: 20px; }
.items { display: flex; height: 85px; border: 1px solid #b0b0b0; overflow: hidden; background: #fff; }
.tbl { flex: 1; }
.row { height: 22px; display: grid; grid-template-columns: 43px 43px 1fr; align-items: center; font-size: 14px; }
.row > span { padding-left: 3px; display: flex; align-items: center; }
.row .nm { padding-left: 4px; gap: 8px; }
.nm svg { width: 18px; height: 18px; }
.nm b { font-size: 14.200px; margin-top: -2px; letter-spacing: .1px; }
.sc { font-size: 14.200px; margin-top: -2px; letter-spacing: .15px; }
.head { height: 24px; background: linear-gradient(#fff, #ececec); border-bottom: 1px solid #aaa; font-size: 12px; }
.head > span { height: 23px; border-right: 1px solid #ccc; }
.head > span:last-child { border: 0; padding: 0 0 2px 2px; }
.eye { width: 20px; height: 14px; margin-left: -1px; } .lk { width: 16px; height: 20px; margin-left: 1px; }
.cb { width: 17px; height: 17px; border: 1px solid #b5b5b5; background: #fff; display: block; flex: none; }
.cb svg { width: 16px; height: 16px; display: block; }
.vscroll { width: 17px; display: flex; flex-direction: column; border-left: 1px solid #b5b5b5; background: #e6e6e6; }
.vscroll b { height: 16px; background: #fafafa; border-bottom: 1px solid #b5b5b5; display: flex; align-items: center; justify-content: center; }
.vscroll b::before { content: ""; border: 5px solid transparent; border-top-width: 0; border-bottom-color: #505050; }
.vscroll .dn { border-bottom: 0; border-top: 1px solid #b5b5b5; height: 17px; }
.vscroll .dn::before { border-top: 5px solid #505050; border-bottom: 0; }
.vscroll em { height: 33px; background: linear-gradient(90deg, #fff, #f3f3f3); border-bottom: 1px solid #b5b5b5; }
.vscroll i { flex: 1; }
.split { height: 7px; background: radial-gradient(circle, #aaa .7px, transparent 1px) 50% 3px / 3px 3px no-repeat; background-repeat: repeat-x; background-clip: content-box; padding: 2px 259px; }
.second { height: 30px; }
.cap { height: 21px; background: #c7c7c7; border-bottom: 1px solid #b5b5b5; font-weight: bold; font-size: 12.500px; line-height: 20px; padding-left: 5px; }
.props { height: 479px; display: flex; border-left: 1px solid #b0b0b0; border-bottom: 1px solid #b0b0b0; border-right: 1px solid #c5c5c5; overflow: hidden; }
.form { flex: 1; padding: 0 11px 0 12px; }
.gb { border: 1px solid #d5d5d5; background: #ececec; padding: 0 13px 0 12px; }
.g1 { height: 93px; border-top: 0; }
.fr { display: flex; align-items: center; }
.wrap { height: 17px; } .wrap label { margin-top: -6px; width: 135px; white-space: nowrap; }
.inp { flex: 1; height: 17px; background: #fff; border: 1px solid #aaa; border-top: 0; border-radius: 0 0 3px 3px; }
.arr { height: 29px; margin-top: 6px; } .arr label { width: 135px; }
.combo { flex: 1; height: 29px; display: flex; align-items: center; border: 1px solid #a7a7a7; border-radius: 3px; background: linear-gradient(#fff, #ececec); padding: 0 9px 0 6px; }
.combo svg { width: 6px; height: 16px; margin-right: 16px; } .combo .tri { margin-left: auto; }
.ck { margin-top: 8px; gap: 6px; height: 17px; letter-spacing: -.05px; }
h3 { margin: 0; height: 27px; display: flex; align-items: center; gap: 7px; font-size: 12.500px; padding: 4px 0 0 2px; letter-spacing: .15px; }
.big { border-width: 6px; border-top-width: 7px; border-top-color: #333; border-bottom: 0; }
.g2 { height: 370px; border-radius: 3px; }
.au { height: 23px; margin-top: 12px; gap: 6px; }
button { margin-left: auto; width: 97px; height: 23px; padding: 0; border: 1px solid #c1c1c1; border-radius: 3px; background: linear-gradient(#fdfdfd, #f0f0f0); color: #777; font: 12px "Noto Sans", sans-serif; white-space: nowrap; letter-spacing: .1px; }
.tree { height: 250px; margin-top: 6px; border: 1px solid #b0b0b0; background: #fff; font-size: 14px; padding: 0 0 0 8px; letter-spacing: .05px; }
.tree > div { height: 22px; display: flex; align-items: center; white-space: nowrap; }
.tree > .t2 { padding-left: 45px; height: 21.900px; } .tree > .t1 { padding-left: 20px; }
.tree > .t0 { letter-spacing: .3px; }
.tree > .bc { height: 20px; }
.sw { width: 19px; height: 19px; border: 1px solid #333; margin-right: 6px; }
.c1 { background: #fcfdbf; } .c2 { background: #fc8961; } .c3 { background: #b73779; } .c4 { background: #51127c; } .c5 { background: #000004; } .c6 { background: #d3b13b; }
.dot { width: 11px; height: 11px; margin: 0 10px 0 4px; border: 1px solid #333; border-radius: 50%; background: #6c9a6c; }
.ex { margin-right: 10px; }
.ly { width: 21px; height: 16px; margin: -3px 5px 0 0; } .ras { width: 17px; height: 17px; margin: 0 7px 0 2px; }
.btns { display: flex; gap: 3px; margin-top: 5px; }
.btns b { width: 24px; height: 24px; border: 1px solid #c3c3c3; border-radius: 3px; background: linear-gradient(#fbfbfb, #efefef); display: flex; justify-content: center; align-items: center; font: bold 17px "Liberation Serif", serif; color: #c0b7c0; }
.btns b svg { width: 22px; height: 22px; }
.btns .en { border-color: #999; color: #5b3262; font-size: 19px; }
.btns u { flex: 1; }
.btns .ef svg { width: 8px; height: 8px; margin-top: 8px; }
.btns .dd { width: 15px; margin-left: -3px; }
.only { margin-top: 8px; height: 17px; gap: 6px; letter-spacing: .07px; } .last { margin-top: 11px; }
.v2 em { height: 209px; border-top: 1px solid #b5b5b5; } .v2 i { flex: none; height: 52px; } .v2 .f { flex: 1; }
.status { height: 29px; display: flex; align-items: center; white-space: nowrap; padding: 1px 0 0 526px; }
.s1, .s2 { width: 106px; letter-spacing: .22px; } .s3 { width: 107px; padding-left: 1px; letter-spacing: .3px; }
.zoom { width: 176px; height: 25px; border: 1px solid #a7a7a7; border-radius: 3px; background: #fff; display: flex; align-items: center; padding: 0 9px 0 3px; letter-spacing: .4px; }
.zoom .tri { margin-left: auto; }
.slider { width: 98px; height: 6px; margin-left: 7px; border: 1px solid #b0b0b0; border-radius: 3px; background: #cfcfcf; display: flex; align-items: center; border-left: 3px solid #1a78c8; }
.slider i { width: 16px; height: 16px; background: #fdfdfd; border: 1px solid #999; border-radius: 3px; flex: none; margin-left: -1px; }
.sizer { width: 12px; height: 12px; margin: 14px 0 0 auto; }
```
FILE: map.js
```js
const NS = 'http://www.w3.org/2000/svg';
function add(parent, tag, attrs, text) {
  const el = document.createElementNS(NS, tag);
  for (const k in attrs) el.setAttribute(k, attrs[k]);
  if (text !== undefined) el.textContent = text;
  parent.appendChild(el);
  return el;
}

// Rulers: one tick every 5 mm, labels every 50 mm.
const MM = 2.046;
const rt = document.getElementById('rtop');
const rl = document.getElementById('rleft');
for (let mm = 20; mm <= 280; mm += 5) {
  const x = Math.floor(33 + mm * MM) + 0.5;
  const top = mm % 50 === 0 ? 138 : mm % 25 === 0 ? 155 : 158;
  if (x > 63) add(rt, 'path', { d: `M${x} ${top}V163` });
  if (mm % 50 === 0) add(rt, 'text', { x: x + 1.5, y: 153 }, mm);
}
add(rt, 'path', { d: 'M429.5 138V163', class: 'cur' });
for (let mm = -20; mm <= 300; mm += 5) {
  const y = Math.floor(209 + mm * MM) + 0.5;
  const left = mm % 50 === 0 ? 40 : mm % 25 === 0 ? 56 : 59;
  add(rl, 'path', { d: `M${left} ${y}H64` });
  if (mm % 50 === 0) add(rl, 'text', { transform: `translate(54 ${y + 2.5}) rotate(-90)`, 'text-anchor': 'end' }, mm);
}
add(rl, 'path', { d: 'M40 805.500H64', class: 'cur' });

// Land-cover texture.
let seed = 11;
const rnd = () => (seed = (seed * 16807) % 2147483647) / 2147483647;
const patches = document.getElementById('patches');
const tones = ['#f0ede3', '#cfeab9', '#b9d9ae', '#e6eec9', '#dfdcd8', '#c9e6b4', '#eef0d5', '#b9dcb0'];
for (let n = 0; n < 800; n++) {
  const cx = rnd() * 1480, cy = rnd() * 950, r = 6 + rnd() * rnd() * 30;
  let d = '';
  for (let k = 0; k < 7; k++) {
    const a = k * 0.9, q = r * (0.5 + rnd() * 0.8);
    d += (k ? 'L' : 'M') + (cx + Math.cos(a) * q * 1.3).toFixed(1) + ' ' + (cy + Math.sin(a) * q).toFixed(1);
  }
  add(patches, 'path', { d: d + 'z', fill: tones[Math.floor(rnd() * 8)], opacity: 0.7 });
}
const blocks = document.getElementById('blocks');
for (let n = 0; n < 170; n++) {
  const x = 700 + rnd() * 370, y = 250 + rnd() * 550;
  add(blocks, 'rect', { x, y, width: 6 + rnd() * 22, height: 5 + rnd() * 18, fill: ['#cfe5bd', '#efece6', '#cecbca', '#e5d8d0'][n % 4] });
}

// Grid cells, "row y: x or x1-x2 with class letter" (o, m, p, k; none = lowest class).
const city = `206:152
216:152o,162p
227:152-162
237:131o,214-224
247:110,214-224,266,287
258:121,256-276,308
268:245m,256-266,276,308
279:142-152m,204-214,235-266,256p,276,297
289:131-204,142p,142m,173m,194o,214m,235-266,256m,266o,287
300:131o,142m,152-194,163o,194m,214-256,235p,245m,276o,297
310:142-183,152m,204-225,235-266,245o,276-287
320:48,100-110,131-152,163-173m,204-266,245p,276-287m
331:17,100-110,131-152,225p,235-256
341:17m,90-110,173,214-235,245m
352:17-48,69,194-204,214-235
362:27-48,121o,131,152-173,173o,214-235
372:37-48,69,100,142o,163,183,214-225,235o
383:7o,37-69,69o,100,142m,163-194,204o,225m,235-256m,245o
393:37-58,48o,90,142m,163,173-183o,204,214
404:7,17-48,17o,100-121,110o,121p,131,152-173,183o,204
414:7o,90-110,121p,142-152,194,235-266
424:7,17,79,90-152,131o,121m,152m,266
435:58-69,69o,100-121,142-163,256-266
445:142-163,225-245,256
456:121,152-163,214-266,245o,204
466:100-121,152,183,204o,214m,225k,245-266,266o
476:79-90,110o,163,214-245,235m,266
487:69,100m,110,121p,152-163,235o,245m,256-266,318-329
497:7-17o,69,100p,110m,121p,173,225-266,235o,245p,308-329
508:7-27o,17m,79,90-121,100o,152,225-266,235o,308o,318-329
518:7,17-27o,27-90,48m,90o,131-152,163m,225-245,235m,308m,318o,329,404-425,432o
529:7,27o,48-90,69o,121-142,152-194,163m,183m,204,235p,308-329,318o
539:7o,27o,69-121,69-79o,142-204,152o,163p,173m,194o,308-329
549:37m,58-90,79o,110-204,131m,152-163m,194k,183o,235,308-329
560:48-58,121-204,142o,163m,173o,183m,225-245,245p,308-318
570:90-204,100m,121k,131m,142-152o,163p,183m,235o,245,287-318,318o
581:58,90-194,90m,121o,142m,152-163o,173m,235o,266,276-318,297m
591:58-121,90-100m,110o,152-204,163o,183m,287-318,308o,350m
601:69-121,100m,110o,142,163-194,173o,266,287-339,308-318o,350o
612:37-90,79o,110-121,152-173,287-339,339m,350-360,350m
622:58,90,121-131,276-360,308o,339o,360k
633:79m,297-329,318m,350-360,350m
643:152,245-256o,256,339-350m,350
653:69o,131o,256
664:173o,245-256,350
674:183-194,194o,287-308,308m
685:58-79,69m,131-152,183-204,194o,225m,245,256-276,276m,297-318,308o
695:58m,69o,90,121,131-152,183-214,194o,266-276,276o
705:58-79m,79o,110-142,131o,183-225,194o,287-308,297m
716:110-131,121o,131-163,183-214,204o,256,329-350,360o
726:79,37-48,100-142,110o,131m,152-183,183-225,194o,308,318
737:7o,37-58,58o,110-163,121o,142m,152o,194-245,204o,308
747:7,27-69,27m,48o,79m,110-131,121k,152-235,163m,183o,204o
757:7o,27-58,48o,69,79o,131,183-245,204o,225m,235o,308m
768:7,27-58,37m,194-235,204m,245o
778:48,58,69m,79m,152-163,173m,194-235,256
789:7,7o,152-204,163o,245,297,339o,350m
799:7,152-163o,194-225,256
820:142-152
830:100m,411o,421-432
841:183-214
851:183-214,204
382:464o
445:350m
508:453`;
const coast = `404:217
414:227
424:238o
591:217
601:217-227,227o
612:217o,227o
622:217-227,227o
633:217
643:217o
674:320
685:362
695:373
705:300,665
737:425
829:467
841:570
341:477
320:643
329:643o
414:654,705-737,715o
404:705-737,737o
393:715-737,725o
383:725o
424:715o
435:715-737
331:737
341:737m
352:737
497:725-748
508:725-748o,725
518:725-748o,737
529:725-748,725o,748m
539:715,737-748o
716:675,695
726:665,675-705,695-705m,725
737:633-665,643o,705,725-737o
747:633-665,643o,685,725o
757:612,643-665,654o
768:612,633-665,654o,675-685
778:633-654,654o,675-685,715-737,725o
789:580,643,654o,675-685,716m,725-737
799:570,643-654,685,725o`;
const fills = { y: '#faf7b8', o: '#ee7040', m: '#9c2465', p: '#3d1173', k: '#080408' };
function plot(src, dx, target) {
  const grid = new Map();
  for (const line of src.split('\n')) {
    const [ys, list] = line.split(':');
    const r = Math.round((ys - 206) / 10.4);
    for (const part of list.split(',')) {
      const cls = /[ompk]$/.test(part) ? part.slice(-1) : 'y';
      const [a, b = a] = part.replace(/[ompk]/, '').split('-').map(Number);
      for (let x = a; x <= b + 1; x += 10.4) grid.set(Math.round((x + dx - 152) / 10.4) + ',' + r, cls);
    }
  }
  for (const [key, cls] of grid) {
    const [c, r] = key.split(',').map(Number);
    add(target, 'rect', { x: 720 + 152 + c * 10.4 - 4.7, y: 206 + r * 10.4 - 4.7, width: 9.4, height: 9.4, fill: fills[cls], stroke: '#5a5840', 'stroke-width': 1.4 });
  }
}
plot(city, 0, document.getElementById('cells'));
plot(coast, -720, document.getElementById('cells'));
```
